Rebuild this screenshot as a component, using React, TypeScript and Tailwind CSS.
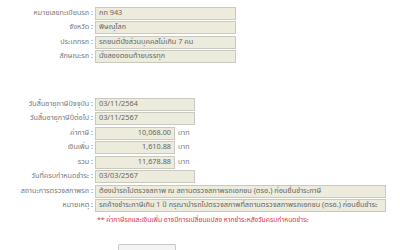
const font = "font-['Tahoma','Noto_Sans_Thai','Noto_Sans','Liberation_Sans',sans-serif]";

function Row({ label, children }: { label: string; children: React.ReactNode }) {
  return (
    <div className="flex h-[14.5px] items-center">
      <div className="w-[95px] shrink-0 pr-[2px] text-right text-[7.2px] text-[#777]">{label} :</div>
      {children}
    </div>
  );
}

function Box({ value, className = '', right = false }: { value: string; className?: string; right?: boolean }) {
  return (
    <div
      className={`flex h-[13px] items-center overflow-hidden whitespace-nowrap border border-[#c9c9c2] bg-[#ecebdc] px-[3px] text-[7.3px] text-[#666] ${right ? 'justify-end' : ''} ${className}`}
    >
      {value}
    </div>
  );
}

export default function App() {
  return (
    <div className={`h-[250px] w-[400px] overflow-hidden bg-white ${font}`}>
      <div className="pt-[6px]">
        <Row label="หมายเลขทะเบียนรถ"><Box value="กท 943" className="w-[141px]" /></Row>
        <Row label="จังหวัด"><Box value="พิษณุโลก" className="w-[141px]" /></Row>
        <Row label="ประเภทรถ"><Box value="รถยนต์นั่งส่วนบุคคลไม่เกิน 7 คน" className="w-[141px]" /></Row>
        <Row label="ลักษณะรถ"><Box value="นั่งสองตอนท้ายบรรทุก" className="w-[141px]" /></Row>
      </div>
      <div className="pt-[33px]">
        <Row label="วันสิ้นอายุภาษีปัจจุบัน"><Box value="03/11/2564" className="w-[100px]" /></Row>
        <Row label="วันสิ้นอายุภาษีปีต่อไป"><Box value="03/11/2567" className="w-[100px]" /></Row>
        <Row label="ค่าภาษี">
          <Box value="10,068.00" right className="w-[80px]" />
          <span className="pl-[3px] text-[7.2px] text-[#777]">บาท</span>
        </Row>
        <Row label="เงินเพิ่ม">
          <Box value="1,610.88" right className="w-[80px]" />
          <span className="pl-[3px] text-[7.2px] text-[#777]">บาท</span>
        </Row>
        <Row label="รวม">
          <Box value="11,678.88" right className="w-[80px]" />
          <span className="pl-[3px] text-[7.2px] text-[#777]">บาท</span>
        </Row>
        <Row label="วันที่ครบกำหนดชำระ"><Box value="03/03/2567" className="w-[100px]" /></Row>
        <Row label="สถานะการตรวจสภาพรถ">
          <Box value="ต้องนำรถไปตรวจสภาพ ณ สถานตรวจสภาพรถเอกชน (ตรอ.) ก่อนยื่นชำระภาษี" className="w-[291px]" />
        </Row>
        <Row label="หมายเหตุ">
          <Box value="รถค้างชำระภาษีเกิน 1 ปี กรุณานำรถไปตรวจสภาพที่สถานตรวจสภาพรถเอกชน (ตรอ.) ก่อนยื่นชำระ" className="w-[291px]" />
        </Row>
        <div className="flex h-[14px] items-center pl-[97px] text-[6.8px] text-[#e0304a]">
          ** ค่าภาษีรถและเงินเพิ่ม อาจมีการเปลี่ยนแปลง หากชำระหลังวันครบกำหนดชำระ
        </div>
        <div className="pl-[118px] pt-[17px]">
          <div className="h-[10px] w-[58px] rounded-t-[2px] border border-b-0 border-[#c8c8c8] bg-[#f4f4f4]" />
        </div>
      </div>
    </div>
  );
}
